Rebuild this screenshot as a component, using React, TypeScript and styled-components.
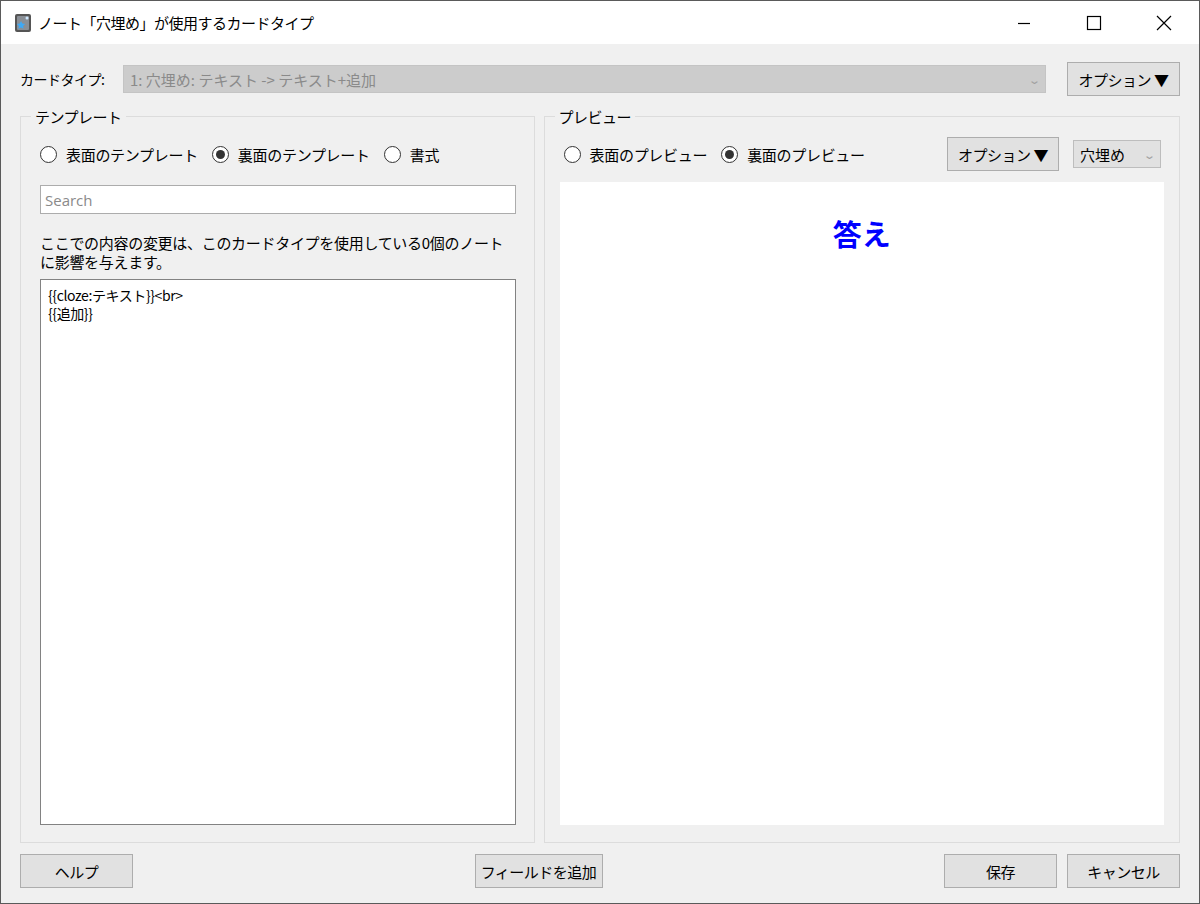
import React from "react";
import styled, { createGlobalStyle } from "styled-components";

const G = createGlobalStyle`
  html, body { margin: 0; padding: 0; }
  body { font-family: "Noto Sans CJK JP", "Noto Sans", sans-serif; font-size: 15px; color: #000; }
`;

const Win = styled.div`
  width: 1200px; height: 904px; box-sizing: border-box;
  border: 1px solid #5a5a5a; background: #f0f0f0;
  display: flex; flex-direction: column;
`;
const TitleBar = styled.div`
  height: 43px; background: #fff; display: flex; align-items: center;
  padding-left: 13px; flex-shrink: 0;
`;
const Title = styled.div`flex: 1; margin-left: 6px; font-size: 15px; letter-spacing: -0.5px;`;
const Ctrl = styled.div`
  width: 70px; height: 43px; display: flex; align-items: center; justify-content: center;
`;
const Body = styled.div`
  flex: 1; display: flex; flex-direction: column; padding: 18px 19px 15px 19px; gap: 0;
`;
const TopRow = styled.div`display: flex; align-items: center; height: 34px;`;
const Label = styled.div`width: 103px; font-size: 14px; letter-spacing: -0.5px;`;
const Combo = styled.div<{ $w?: string }>`
  flex: ${p => (p.$w ? "none" : "1")}; width: ${p => p.$w || "auto"};
  height: 28px; box-sizing: border-box; background: ${p => (p.$w ? "#e1e1e1" : "#cccccc")};
  border: 1px solid ${p => (p.$w ? "#bdbdbd" : "#c4c4c4")};
  display: flex; align-items: center; padding: 0 6px; color: ${p => (p.$w ? "#000" : "#8a8a8a")};
  font-size: 15px; justify-content: space-between;
`;
const Chev = styled.span`color: #a0a0a0; font-size: 11px; transform: scaleX(1.4);`;
const Btn = styled.div<{ $w: number }>`
  width: ${p => p.$w}px; height: 34px; box-sizing: border-box; background: #e1e1e1;
  border: 1px solid #adadad; display: flex; align-items: center; justify-content: center;
  font-size: 15px; letter-spacing: -0.5px; flex-shrink: 0;
`;
const Panels = styled.div`display: flex; gap: 9px; margin-top: 20px; flex: 1;`;
const Group = styled.div<{ $w: number }>`
  width: ${p => p.$w}px; box-sizing: border-box; border: 1px solid #dcdcdc; position: relative;
  display: flex; flex-direction: column; padding: 22px 18px 17px 19px;
`;
const Legend = styled.div`
  position: absolute; top: -11px; left: 10px; background: #f0f0f0; padding: 0 4px;
  font-size: 15px; letter-spacing: -0.5px;
`;
const RadioRow = styled.div`display: flex; align-items: center; height: 30px; gap: 14px;`;
const Radio = styled.label`display: flex; align-items: center; gap: 9px; letter-spacing: -0.3px;`;
const Dot = styled.span<{ $on?: boolean }>`
  width: 17px; height: 17px; border-radius: 50%; box-sizing: border-box; border: 1px solid #333;
  background: #fff; display: flex; align-items: center; justify-content: center;
  &::after { content: ""; width: 9px; height: 9px; border-radius: 50%; background: ${p => (p.$on ? "#333" : "transparent")}; }
`;
const Search = styled.div`
  margin-top: 16px; height: 29px; box-sizing: border-box; border: 1px solid #acacac; background: #fff;
  color: #8a8a8a; display: flex; align-items: center; padding-left: 4px; font-family: "Open Sans", sans-serif; font-size: 15px;
`;
const Note = styled.div`margin-top: 19px; line-height: 19px; letter-spacing: -0.3px;`;
const Editor = styled.div`
  margin-top: 8px; flex: 1; background: #fff; border: 1px solid #828282; padding: 6px 7px;
  line-height: 18px; font-size: 14px; letter-spacing: -0.4px;
`;
const Spacer = styled.div`flex: 1;`;
const Preview = styled.div`
  margin-top: 13px; flex: 1; background: #fff; display: flex; justify-content: center; margin-right: -3px; margin-left: -4px;
`;
const Answer = styled.div`
  margin-top: 30px; color: #0000ff; font-weight: bold; font-size: 29px; height: 40px;
`;
const Bottom = styled.div`display: flex; align-items: center; margin-top: 11px;`;

export default function App() {
  return (
    <>
      <G />
      <Win>
        <TitleBar>
          <svg width="18" height="20" viewBox="0 0 18 20">
            <rect x="1" y="1" width="16" height="18" rx="2" fill="#555" />
            <rect x="3" y="3" width="12" height="14" rx="1" fill="#8a8f96" />
            <path d="M7 8l1.3 2.6 2.8.4-2 2 .5 2.8L7 14.5l-2.6 1.3.5-2.8-2-2 2.8-.4z" fill="#3fa9f5" />
            <circle cx="13" cy="5" r="1.5" fill="#cfe8ff" />
          </svg>
          <Title>ノート「穴埋め」が使用するカードタイプ</Title>
          <Ctrl>
            <svg width="14" height="14"><path d="M1 7.5h12" stroke="#000" strokeWidth="1.2" /></svg>
          </Ctrl>
          <Ctrl>
            <svg width="16" height="16"><rect x="1.5" y="1.5" width="13" height="13" fill="none" stroke="#000" strokeWidth="1.2" /></svg>
          </Ctrl>
          <Ctrl>
            <svg width="16" height="16"><path d="M1 1l14 14M15 1L1 15" stroke="#000" strokeWidth="1.2" /></svg>
          </Ctrl>
        </TitleBar>
        <Body>
          <TopRow>
            <Label>カードタイプ:</Label>
            <Combo>1: 穴埋め: テキスト -&gt; テキスト+追加<Chev>⌄</Chev></Combo>
            <div style={{ width: 21 }} />
            <Btn $w={113}>オプション ▼</Btn>
          </TopRow>
          <Panels>
            <Group $w={515}>
              <Legend>テンプレート</Legend>
              <RadioRow>
                <Radio><Dot />表面のテンプレート</Radio>
                <Radio><Dot $on />裏面のテンプレート</Radio>
                <Radio><Dot />書式</Radio>
              </RadioRow>
              <Search>Search</Search>
              <Note>ここでの内容の変更は、このカードタイプを使用している0個のノート<br />に影響を与えます。</Note>
              <Editor>{"{{cloze:テキスト}}<br>"}<br />{"{{追加}}"}</Editor>
            </Group>
            <Group $w={637}>
              <Legend>プレビュー</Legend>
              <RadioRow>
                <Radio><Dot />表面のプレビュー</Radio>
                <Radio><Dot $on />裏面のプレビュー</Radio>
                <Spacer />
                <Btn $w={112}>オプション ▼</Btn>
                <Combo $w="88px">穴埋め<Chev>⌄</Chev></Combo>
              </RadioRow>
              <Preview><Answer>答え</Answer></Preview>
            </Group>
          </Panels>
          <Bottom>
            <Btn $w={113}>ヘルプ</Btn>
            <Spacer />
            <Btn $w={128}>フィールドを追加</Btn>
            <Spacer />
            <Btn $w={113}>保存</Btn>
            <div style={{ width: 10 }} />
            <Btn $w={113}>キャンセル</Btn>
          </Bottom>
        </Body>
      </Win>
    </>
  );
}
